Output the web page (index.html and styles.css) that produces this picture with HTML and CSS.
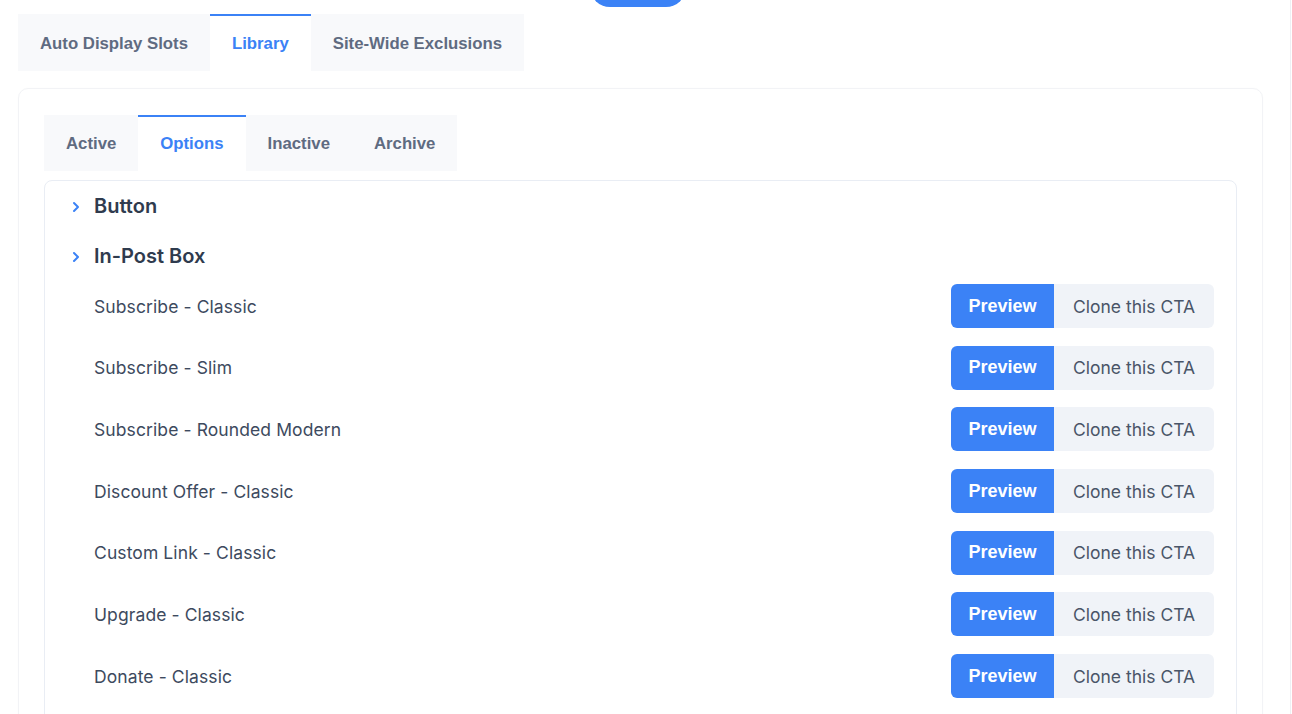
FILE: index.html
```html
<!DOCTYPE html>
<html lang="en">
<head>
<meta charset="utf-8">
<title>CTA Library</title>
<link rel="stylesheet" href="styles.css">
</head>
<body>
<div class="page">
  <div class="top-pill"></div>
  <div class="tabs main-tabs">
    <div class="tab">Auto Display Slots</div>
    <div class="tab active">Library</div>
    <div class="tab">Site-Wide Exclusions</div>
  </div>
  <div class="card">
    <div class="tabs sub-tabs">
      <div class="tab">Active</div>
      <div class="tab active">Options</div>
      <div class="tab">Inactive</div>
      <div class="tab">Archive</div>
    </div>
    <div class="panel">
      <div class="group-head">
        <svg class="chev" width="10" height="12" viewBox="0 0 10 12"><path d="M3 2 L7 6 L3 10" fill="none" stroke="#3b82f6" stroke-width="2" stroke-linecap="round" stroke-linejoin="round"/></svg>
        <span>Button</span>
      </div>
      <div class="group-head">
        <svg class="chev" width="10" height="12" viewBox="0 0 10 12"><path d="M3 2 L7 6 L3 10" fill="none" stroke="#3b82f6" stroke-width="2" stroke-linecap="round" stroke-linejoin="round"/></svg>
        <span>In-Post Box</span>
      </div>
      <div class="items">
        <div class="item"><span class="name">Subscribe - Classic</span><div class="actions"><button class="btn preview">Preview</button><button class="btn clone">Clone this CTA</button></div></div>
        <div class="item"><span class="name">Subscribe - Slim</span><div class="actions"><button class="btn preview">Preview</button><button class="btn clone">Clone this CTA</button></div></div>
        <div class="item"><span class="name">Subscribe - Rounded Modern</span><div class="actions"><button class="btn preview">Preview</button><button class="btn clone">Clone this CTA</button></div></div>
        <div class="item"><span class="name">Discount Offer - Classic</span><div class="actions"><button class="btn preview">Preview</button><button class="btn clone">Clone this CTA</button></div></div>
        <div class="item"><span class="name">Custom Link - Classic</span><div class="actions"><button class="btn preview">Preview</button><button class="btn clone">Clone this CTA</button></div></div>
        <div class="item"><span class="name">Upgrade - Classic</span><div class="actions"><button class="btn preview">Preview</button><button class="btn clone">Clone this CTA</button></div></div>
        <div class="item"><span class="name">Donate - Classic</span><div class="actions"><button class="btn preview">Preview</button><button class="btn clone">Clone this CTA</button></div></div>
      </div>
    </div>
  </div>
</div>
</body>
</html>
```

FILE: styles.css
```css
* { box-sizing: border-box; }
html, body { margin: 0; padding: 0; background: #ffffff; }
body {
  font-family: Inter, "Noto Sans", sans-serif;
  color: #334155;
  overflow: hidden;
  height: 714px;
}
.page {
  width: 1291px;
  min-height: 714px;
  border-right: 1px solid #eef0f4;
  padding: 0 27px 0 18px;
}
.top-pill {
  width: 96px;
  height: 40px;
  margin-top: -33px;
  margin-left: 572px;
  margin-bottom: 7px;
  background: #3b82f6;
  border-radius: 22px;
}
.tabs {
  display: flex;
  width: max-content;
  background: #f8f9fb;
}
.tab {
  font-family: "Liberation Sans", Arial, sans-serif;
  font-weight: 700;
  font-size: 16.75px;
  color: #5f6b81;
  padding: 0 22px;
  display: flex;
  align-items: center;
  border-top: 2px solid transparent;
}
.tab.active {
  background: #ffffff;
  color: #3b82f6;
  border-top-color: #3b82f6;
}
.main-tabs .tab { height: 57px; }
.sub-tabs .tab { height: 56px; padding: 0 22px; }
.card {
  margin-top: 17px;
  border: 1px solid #f2f3f6;
  border-radius: 10px;
  padding: 26px 25px 0 25px;
  min-height: 700px;
  display: flex;
  flex-direction: column;
  box-shadow: 0 0 2px rgba(15, 23, 42, 0.02);
}
.panel {
  margin-top: 9px;
  border: 1px solid #e9edf4;
  border-radius: 8px;
  padding: 0 22px 20px 26px;
  min-height: 600px;
}
.group-head {
  display: flex;
  align-items: center;
  height: 50px;
  font-size: 20px;
  font-weight: 600;
  color: #2f3b4e;
}
.chev { margin-right: 13px; margin-top: 1px; }
.items {
  display: flex;
  flex-direction: column;
  gap: 17.7px;
  padding: 3px 0 0 0;
}
.item {
  display: flex;
  align-items: center;
  justify-content: space-between;
  padding-left: 23px;
}
.name {
  font-size: 17.5px;
  color: #3d4a5e;
  letter-spacing: 0.1px;
}
.actions { display: flex; }
.btn {
  border: 0;
  height: 44px;
  margin: 0;
  cursor: pointer;
}
.preview {
  background: #3b82f6;
  color: #ffffff;
  font-family: "Liberation Sans", Arial, sans-serif;
  font-weight: 700;
  font-size: 18px;
  width: 103px;
  border-radius: 6px 0 0 6px;
}
.clone {
  background: #f0f3f8;
  color: #4a5568;
  font-family: Inter, "Noto Sans", sans-serif;
  font-size: 17.5px;
  width: 160px;
  border-radius: 0 6px 6px 0;
}
```
